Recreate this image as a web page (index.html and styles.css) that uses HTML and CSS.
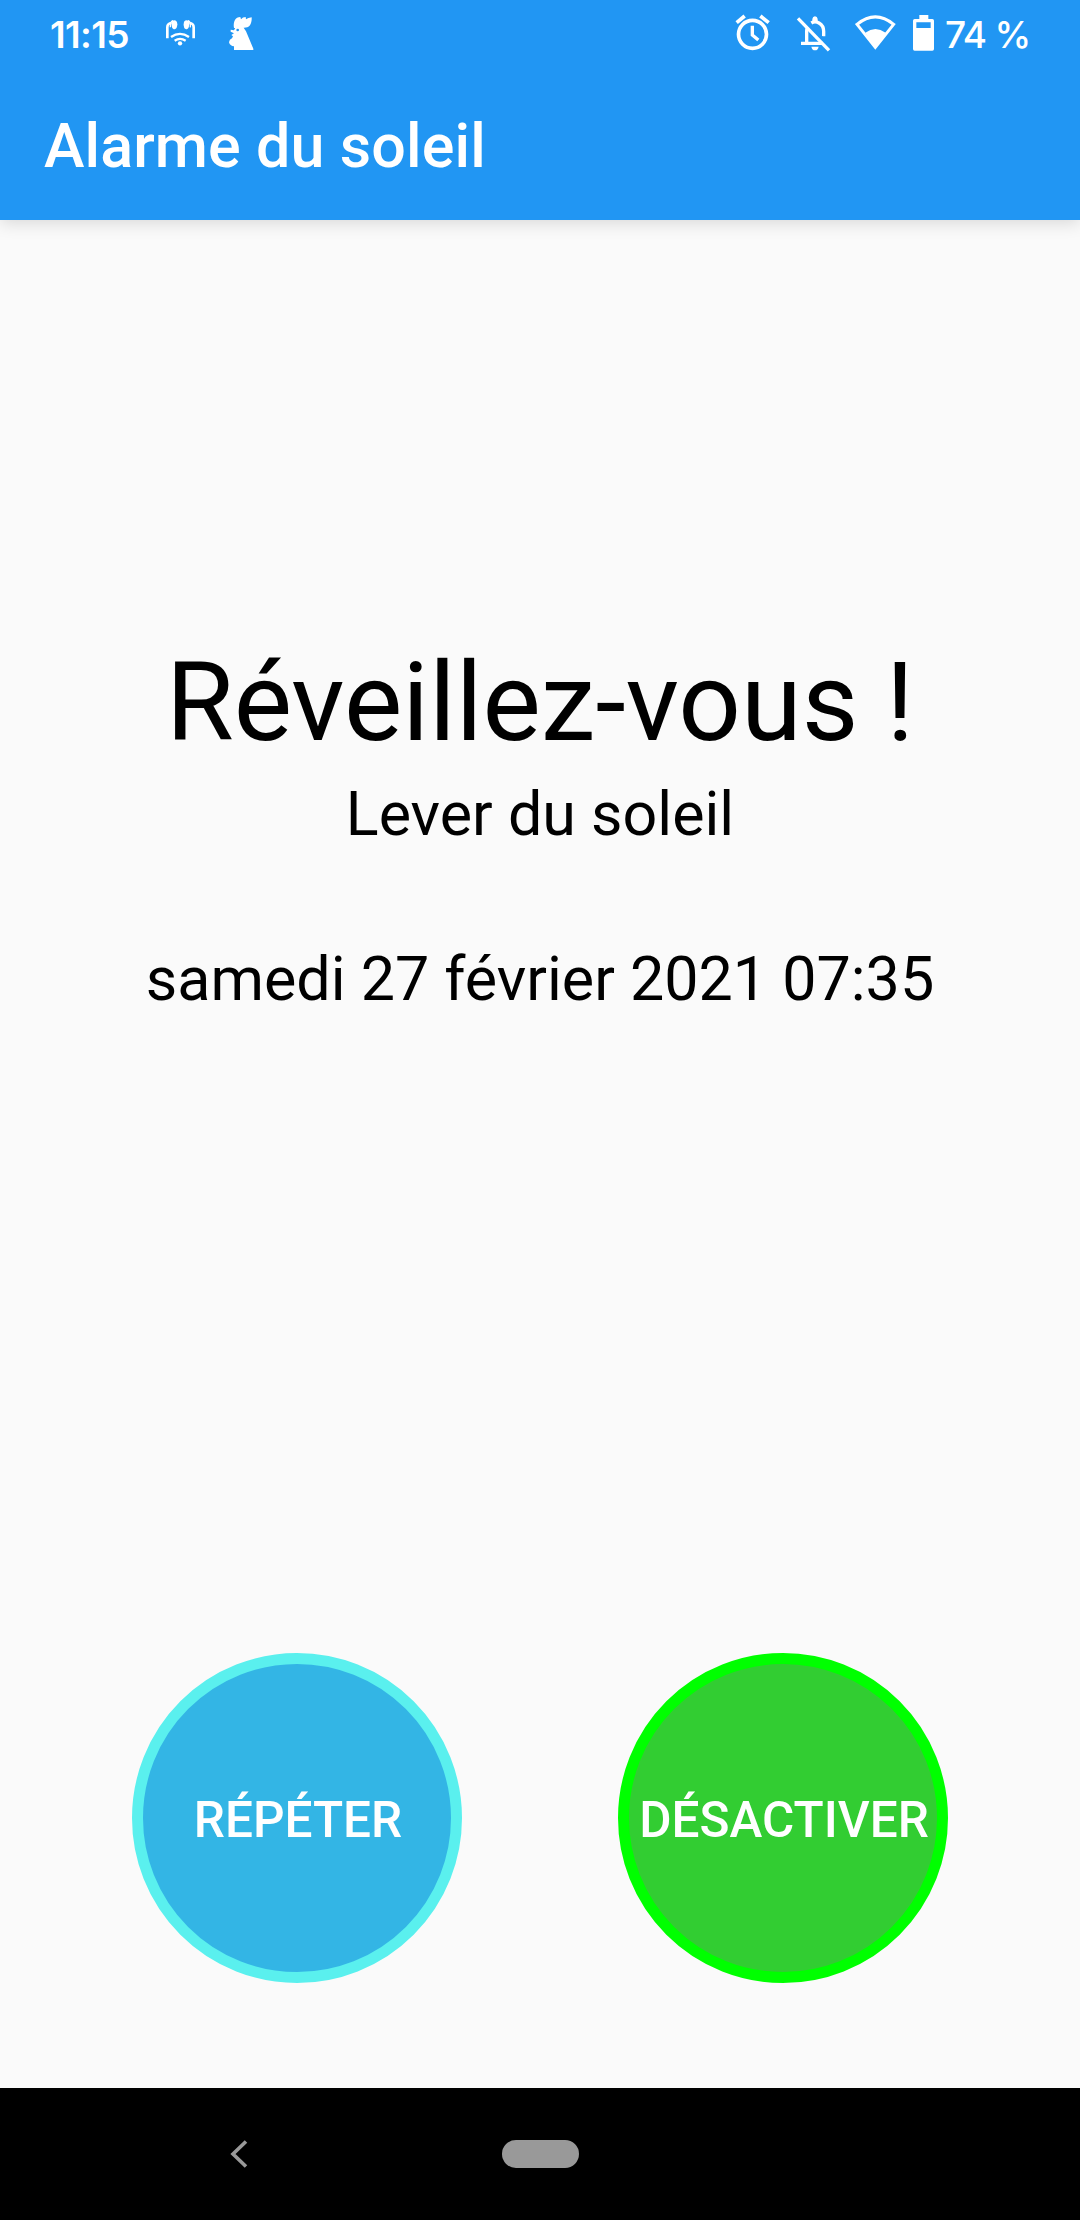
FILE: index.html
```
<!DOCTYPE html>
<html lang="fr">
<head>
  <meta charset="UTF-8">
  <meta name="viewport" content="width=device-width, initial-scale=1.0">
  <title>Alarme du soleil</title>
  <link rel="stylesheet" href="styles.css">
</head>
<body>
  <header class="app-header">
    <!-- Barre d'état -->
    <div class="status-bar">
      <span class="clock">11:15</span>
      <svg class="icon-earbuds" viewBox="402 0 99 180">
        <path d="M412 115V82Q412 70 425 69M491 115V82Q491 70 478 69" fill="none" stroke="#fff" stroke-width="8"/>
        <path d="M426 62Q441 56 442 73Q441 91 430 87Q422 82 426 62Z" fill="#fff"/>
        <path d="M477 62Q461 56 461 73Q461 91 472 87Q480 82 477 62Z" fill="#fff"/>
        <path d="M421 82Q420 64 429 62M481 82Q483 64 474 62" fill="none" stroke="#fff" stroke-width="4"/>
        <path d="M423 111Q450 92 477 111M434 122Q450 111 467 122" fill="none" stroke="#fff" stroke-width="7"/>
        <circle cx="450" cy="130" r="6.500" fill="#fff"/>
      </svg>
      <svg class="icon-rooster" viewBox="591 0 84 180">
        <path fill="#fff" d="M612 84C610 72 612 55 626 52L631 51L633 58Q638 51 647 51L648 58Q654 53 665 52C666 66 661 79 652 82L638 84Z"/>
        <path fill="#fff" d="M616 83L640 82L648 94L670 146V150H612V139Q600 138 597 127Q598 118 606 115L609 109L604 105L612 100L602 95V89L612 91Z"/>
        <circle cx="623" cy="90" r="4" fill="#2196f3"/>
      </svg>
      <div class="status-right">
        <svg class="icon-alarm" viewBox="42 0 111 180">
          <g fill="none" stroke="#fff">
            <circle cx="97.500" cy="103" r="42" stroke-width="11"/>
            <path d="M97 77V105L115 120" stroke-width="10"/>
            <path d="M50 68L74 48M121 48L146 68" stroke-width="11"/>
          </g>
        </svg>
        <svg class="icon-bell" viewBox="228 0 108 180">
          <path d="M260 131V94Q260 87 264 82M274 69Q285 62 297 69Q311 77 311 94V109M243 130H309" fill="none" stroke="#fff" stroke-width="10"/>
          <path d="M277 66V57Q278 49 285 49Q292 49 293 57V66Z" fill="#fff"/>
          <path d="M274 140H296Q294 151 285 151Q276 151 274 140Z" fill="#fff"/>
          <path d="M242 48L335 141" stroke="#2196f3" stroke-width="6"/>
          <path d="M234 55L327 151" stroke="#fff" stroke-width="10"/>
        </svg>
        <svg class="icon-wifi" viewBox="402 0 129 180">
          <path d="M411 73Q466 28 521 73L466 142Z" fill="none" stroke="#fff" stroke-width="9"/>
          <path d="M436 98Q466 76 497 98L466 145Z" fill="#fff"/>
        </svg>
        <svg class="icon-battery" viewBox="96 0 72 180">
          <path fill="#fff" fill-rule="evenodd" d="M118 45H145V57H157Q162 57 162 62V147Q162 152 157 152H104Q99 152 99 147V62Q99 57 104 57H118ZM109 67V84H152V67Z"/>
        </svg>
        <span class="battery-level">74 %</span>
      </div>
    </div>
    <h1 class="app-title">Alarme du soleil</h1>
  </header>

  <main class="alarm">
    <h2 class="wake-up">Réveillez-vous !</h2>
    <p class="event">Lever du soleil</p>
    <p class="date">samedi 27 février 2021 07:35</p>
    <div class="actions">
      <button class="round-button snooze">RÉPÉTER</button>
      <button class="round-button dismiss">DÉSACTIVER</button>
    </div>
  </main>

  <!-- Barre de navigation -->
  <nav class="nav-bar">
    <svg class="nav-back" viewBox="0 0 18 28">
      <path d="M16 1.500L3 14L16 26.500" fill="none" stroke="#999" stroke-width="3.600"/>
    </svg>
    <div class="nav-home"></div>
  </nav>
</body>
</html>
```
FILE: styles.css
```
* {
  box-sizing: border-box;
}
body {
  display: flex;
  flex-direction: column;
  width: 1080px;
  height: 2220px;
  margin: 0;
  background-color: #fafafa;
  color: #000;
  font-family: Roboto, sans-serif;
}
h1, h2, p {
  margin: 0;
  font-weight: 400;
}

/* En-tête */
.app-header {
  height: 220px;
  background-color: #2196f3;
  color: #fff;
  box-shadow: 0 3px 16px rgba(0, 0, 0, 0.14);
}
.status-bar {
  display: flex;
  align-items: flex-start;
  height: 66px;
  padding-left: 50px;
}
.status-bar svg {
  flex: none;
  height: 60px;
}
.clock, .battery-level {
  padding-top: 12px;
  font-family: Inter, sans-serif;
  font-size: 37px;
  font-weight: 600;
  line-height: 46px;
  white-space: nowrap;
}
.clock {
  width: 114px;
  letter-spacing: -0.6px;
}
.icon-earbuds {
  width: 33px;
}
.icon-rooster {
  width: 28px;
  margin-left: 30px;
}
.status-right {
  display: flex;
  margin-left: auto;
}
.icon-alarm {
  width: 37px;
}
.icon-bell {
  width: 36px;
  margin-left: 25px;
}
.icon-wifi {
  width: 43px;
  margin-left: 22px;
}
.icon-battery {
  width: 24px;
  margin-left: 15px;
}
.battery-level {
  width: 135px;
  margin-left: 9px;
  font-weight: 500;
  letter-spacing: -1.2px;
}
.app-title {
  padding: 44px 44px 0;
  font-size: 61px;
  font-weight: 500;
  line-height: 72px;
  letter-spacing: 0.1px;
}

/* Contenu */
.alarm {
  flex: 1;
  padding-top: 418px;
  text-align: center;
}
.wake-up {
  font-size: 110px;
  line-height: 130px;
}
.event, .date {
  font-size: 61px;
  line-height: 72px;
}
.event {
  margin-top: 10px;
}
.date {
  margin-top: 93px;
}
.actions {
  display: flex;
  justify-content: center;
  gap: 156px;
  margin-top: 638px;
}
.round-button {
  width: 330px;
  height: 330px;
  padding: 4px 0 0 2px;
  border: 11px solid;
  border-radius: 50%;
  color: #fff;
  font-family: Roboto, sans-serif;
  font-size: 49.5px;
  font-weight: 500;
  line-height: 58px;
}
.snooze {
  background-color: #33b5e5;
  border-color: #5af0ee;
}
.dismiss {
  background-color: #32cd32;
  border-color: #00ff00;
}

/* Navigation */
.nav-bar {
  display: flex;
  align-items: center;
  height: 132px;
  padding-left: 230px;
  background-color: #000;
}
.nav-back {
  width: 18px;
  height: 28px;
}
.nav-home {
  width: 77px;
  height: 28px;
  margin-left: 254px;
  border-radius: 14px;
  background-color: #999;
}
```
